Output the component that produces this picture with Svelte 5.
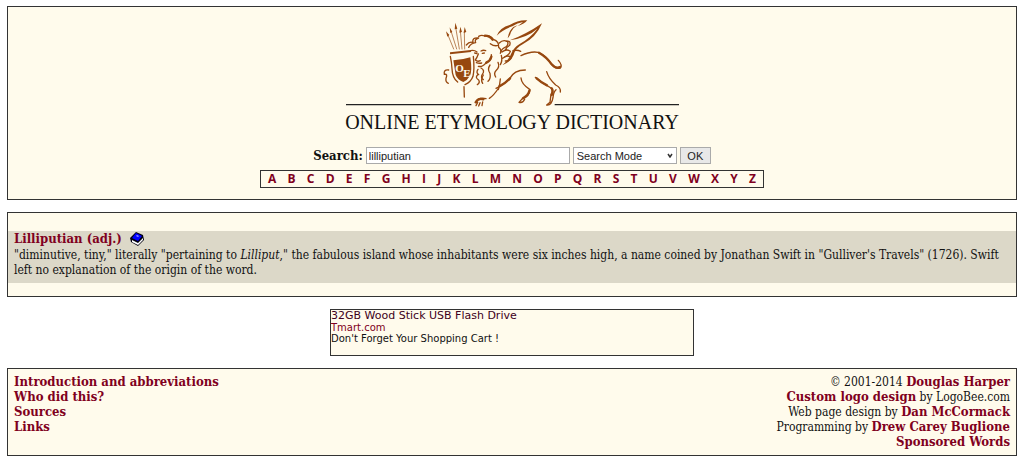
<script lang="ts">
  const letters = 'ABCDEFGHIJKLMNOPQRSTUVWXYZ'.split('');
  const pages = ['Introduction and abbreviations', 'Who did this?', 'Sources', 'Links'];

  let term = $state('lilliputian');
  let mode = $state('');
</script>

<div class="page">
  <header class="panel masthead">
    <a class="logo" href="#home">
      <svg viewBox="-255 0 1002 300" aria-hidden="true">
        <g class="rules">
          <path d="M-252 284H124M374 284H747" />
        </g>
        <!-- arrows -->
        <g class="thin">
          <path d="M53 73L71 117M63 63L80 117M77 52L88 117M91 62L96 117M103 65L104 117" />
        </g>
        <g class="fill">
          <path d="M48 64L58 75L52 80ZM59 52L67 66L61 69ZM76 38L82 56L74 58ZM91 50L96 66L88 68ZM104 51L109 66L101 69Z" />
          <path d="M60 127L122 120L123 126L60 133Z" />
        </g>
        <!-- shield -->
        <path class="fill" d="M70 151Q96 150 121 142Q127 183 120 197Q112 211 100 216Q83 210 77 195Z" />
        <g class="line">
          <path d="M61 139Q65 157 66 176Q67 204 83 216M130 139Q134 177 129 199Q123 216 105 224" />
          <path d="M56 180Q40 178 43 193Q54 191 48 205Q46 216 55 220M102 230L103 261" />
        </g>
        <text class="mono" x="76" y="186">O<tspan dx="-2" dy="14">E</tspan></text>
        <!-- head and mane -->
        <g class="line">
          <path d="M109 105Q119 93 129 98Q125 82 146 84Q132 88 137 98Q123 99 116 112" />
          <path d="M146 79Q154 74 164 78Q180 74 190 88Q208 94 206 112Q216 119 211 130" />
          <path d="M181 101Q193 110 205 106" />
          <path d="M122 122Q132 119 141 126M153 123Q160 119 167 122M134 129L141 131M157 130L163 129" />
          <path d="M145 132Q141 143 136 150Q142 156 151 152M139 158Q148 161 155 159" />
          <path d="M184 134Q187 151 169 157Q158 172 145 169" />
          <path d="M153 174Q166 181 157 193Q151 203 160 209M144 178Q137 188 146 194" />
          <path d="M143 194Q134 203 146 210Q151 218 142 224M160 195Q151 210 158 220" />
          <path d="M180 165Q171 178 180 190Q183 206 174 214M204 157Q210 171 199 181Q190 190 197 201" />
          <path d="M214 136Q218 152 211 164" />
        </g>
        <!-- wings -->
        <g class="fill">
          <path d="M200 77Q211 52 239 45Q265 29 292 31Q281 44 263 48Q274 41 279 36Q262 39 247 49Q218 58 200 77Z" />
          <path d="M263 46Q250 52 243 66Q241 77 233 85Q236 63 250 51Z" />
          <path d="M239 91Q266 81 288 69Q312 57 336 40Q319 82 278 103Q256 114 251 135Q244 155 217 166Q237 149 243 132Q251 112 270 101Q302 83 322 56Q294 82 239 91Z" />
        </g>
        <g class="line">
          <path d="M208 99Q218 88 232 94Q237 101 229 110Q215 116 213 125" />
          <path d="M229 94Q244 91 239 106Q229 111 226 120M216 126Q230 115 241 124Q238 134 224 141" />
          <path d="M218 145Q233 132 243 143Q239 154 226 153M249 122Q263 119 272 124" />
        </g>
        <!-- body and tail -->
        <g class="line">
          <path d="M273 137Q302 123 324 127Q349 136 363 161Q375 179 391 174Q398 165 385 151" />
          <path d="M286 180Q252 180 239 206Q218 226 198 235M211 207Q210 222 205 239" />
          <path d="M206 234Q190 258 178 265M168 266Q145 261 137 277M143 277L138 287M150 278L146 288M158 276L156 287" />
          <path d="M273 204Q274 222 300 239Q299 259 277 266L267 277Q279 280 284 268" />
          <path d="M316 202Q334 218 355 229Q373 237 363 253L360 277L350 285Q365 287 369 263Q370 246 378 239" />
          <path d="M350 185Q356 206 377 225Q393 232 391 246" />
        </g>
        <g class="heavy">
          <path d="M327 128Q350 141 365 163Q377 177 390 171M240 205Q224 222 208 229M137 277Q145 263 160 268M365 235Q371 242 365 255" />
          <path d="M169 158Q181 152 184 140M298 242Q295 255 279 265M320 205Q334 218 351 226M165 77Q178 77 188 89" />
        </g>
      </svg>
      <h1>ONLINE ETYMOLOGY DICTIONARY</h1>
    </a>

    <form class="search" onsubmit={(e) => e.preventDefault()}>
      <label for="term">Search:</label>
      <input id="term" type="text" bind:value={term} />
      <select bind:value={mode} aria-label="Search Mode">
        <option value="">Search Mode</option>
        <option value="phrase">Phrase</option>
      </select>
      <button type="submit">OK</button>
    </form>

    <nav class="letters">
      {#each letters as letter}
        <a href="#{letter}">{letter}</a>
      {/each}
    </nav>
  </header>

  <main class="panel results">
    <dl>
      <dt>
        <a href="#lilliputian">Lilliputian (adj.)</a>
        <a class="book" href="#lookup" aria-label="Look up Lilliputian">
          <svg viewBox="0 0 14 14" aria-hidden="true">
            <path d="M0 6L6 0L13 3L14 8L8 14L1 10Z" fill="#001" />
            <path d="M2 8L8 11L13 6L13 8L8 13L2 10Z" fill="#fff" />
            <path d="M2 6L6 1L12 4L8 9Z" fill="#00f" />
            <path d="M6 4L7 3L9 4L8 5Z" fill="#99f" />
          </svg>
        </a>
      </dt>
      <dd>
        "diminutive, tiny," literally "pertaining to <i>Lilliput</i>," the fabulous island whose
        inhabitants were six inches high, a name coined by Jonathan Swift in "Gulliver's Travels"
        (1726). Swift left no explanation of the origin of the word.
      </dd>
    </dl>
  </main>

  <aside class="ad">
    <a class="ad-title" href="#ad">32GB Wood Stick USB Flash Drive</a>
    <a class="ad-site" href="#ad">Tmart.com</a>
    <p>Don't Forget Your Shopping Cart !</p>
  </aside>

  <footer class="panel footer">
    <ul>
      {#each pages as page}
        <li><a href="#{page}">{page}</a></li>
      {/each}
    </ul>
    <ul class="credits">
      <li>© 2001-2014 <a href="#harper">Douglas Harper</a></li>
      <li><a href="#logo">Custom logo design</a> by LogoBee.com</li>
      <li>Web page design by <a href="#mccormack">Dan McCormack</a></li>
      <li>Programming by <a href="#buglione">Drew Carey Buglione</a></li>
      <li><a href="#sponsored">Sponsored Words</a></li>
    </ul>
  </footer>
</div>

<style>
  :global(body) {
    margin: 0;
    background: #fff;
  }

  .page {
    display: flex;
    flex-direction: column;
    gap: 12px;
    padding: 6px 7px;
    font-family: Georgia, 'DejaVu Serif Condensed', 'DejaVu Serif', serif;
    font-size: 12px;
    line-height: 15px;
    color: #111;
  }

  .panel,
  .ad {
    background: #fffbec;
    border: 1px solid #333;
  }

  a {
    color: #800020;
    font-weight: bold;
    text-decoration: none;
  }

  ul,
  dl,
  dd,
  p,
  h1 {
    margin: 0;
    padding: 0;
    list-style: none;
  }

  /* Masthead */
  .masthead {
    display: flex;
    flex-direction: column;
    align-items: center;
    padding: 3px 0 11px;
  }

  .logo svg {
    display: block;
    width: 334px;
    height: 100px;
  }

  .logo h1 {
    font-family: 'Palatino Linotype', 'Liberation Serif', serif;
    font-size: 20px;
    font-weight: normal;
    line-height: 25px;
    text-align: center;
    white-space: nowrap;
    color: #111;
  }

  .rules {
    stroke: #222;
    stroke-width: 4;
  }

  .fill {
    fill: #97480f;
  }

  .thin,
  .line,
  .heavy {
    fill: none;
    stroke: #97480f;
    stroke-linecap: round;
    stroke-linejoin: round;
  }

  .thin {
    stroke-width: 2;
  }

  .line {
    stroke-width: 4;
  }

  .heavy {
    stroke-width: 7;
  }

  .mono {
    font-family: 'Liberation Serif', serif;
    font-size: 33px;
    fill: #fffbec;
  }

  .search {
    display: flex;
    align-items: center;
    gap: 3px;
    margin-top: 12px;
  }

  .search label {
    font-size: 13px;
    font-weight: bold;
  }

  .search input,
  .search select,
  .search button {
    box-sizing: border-box;
    height: 17px;
    margin: 0;
    border: 1px solid #aaa;
    border-radius: 0;
    font-family: Arial, 'Liberation Sans', sans-serif;
    font-size: 11px;
    color: #222;
    background: #fff;
  }

  .search input {
    width: 204px;
    padding: 0 2px;
  }

  .search select {
    appearance: none;
    width: 104px;
    padding: 0 3px;
    background: #fff
      url("data:image/svg+xml,%3Csvg xmlns='http://www.w3.org/2000/svg' width='6' height='5'%3E%3Cpath d='M1 1L3 4L5 1' fill='none' stroke='%23333' stroke-width='1.5'/%3E%3C/svg%3E")
      no-repeat right 3px center;
  }

  .search button {
    width: 31px;
    padding: 0;
    background: #e8e8e8;
  }

  .letters {
    box-sizing: border-box;
    display: flex;
    justify-content: space-between;
    width: 504px;
    max-width: 100%;
    margin-top: 6px;
    padding: 0 7px;
    border: 1px solid #333;
    font-family: 'Trebuchet MS', 'Open Sans', sans-serif;
    font-size: 12px;
    line-height: 16px;
  }

  /* Entries */
  .results {
    padding: 18px 0 13px;
  }

  .results dl {
    padding: 0 6px 5px;
    background: #dcd8c8;
  }

  .results dt {
    display: flex;
    align-items: center;
    gap: 8px;
    margin-bottom: 2px;
  }

  .results dt,
  .footer a {
    font-size: 13px;
  }

  .book svg {
    display: block;
    width: 14px;
    height: 14px;
  }

  /* Sponsored link */
  .ad {
    align-self: center;
    box-sizing: border-box;
    display: flex;
    flex-direction: column;
    width: 364px;
    max-width: 100%;
    min-height: 47px;
    font-family: Verdana, 'DejaVu Sans', sans-serif;
    font-size: 10px;
    line-height: 11px;
  }

  .ad a {
    font-weight: normal;
  }

  .ad .ad-title {
    font-size: 11px;
    line-height: 12px;
    color: #400020;
  }

  /* Footer */
  .footer {
    display: flex;
    justify-content: space-between;
    padding: 6px 6px 5px;
  }

  .footer a {
    line-height: 13px;
  }

  .credits {
    text-align: right;
  }
</style>
